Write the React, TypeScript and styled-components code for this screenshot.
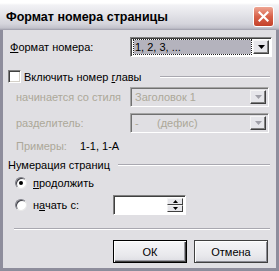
import React from "react";
import styled, { createGlobalStyle } from "styled-components";

const Global = createGlobalStyle`
  html, body { margin: 0; padding: 0; background: #ffffff; }
  body { font-family: "Liberation Sans", Arial, sans-serif; font-size: 11px; color: #000; }
`;

const Window = styled.div`
  width: 279px;
  height: 271px;
  display: flex;
  flex-direction: column;
  background: #8e8d9c;
  overflow: hidden;
`;

const TitleBar = styled.div`
  height: 30px;
  flex: none;
  display: flex;
  align-items: center;
  justify-content: space-between;
  padding: 0 5px 0 6px;
  box-sizing: border-box;
  background: linear-gradient(#ffffff 0px, #ffffff 3px, #f2f2f5 5px, #e4e4e9 14px, #d4d4db 24px, #c2c2cb 28px, #9c9ba8 30px);
`;

const Title = styled.div`
  font-family: "Liberation Sans", Arial, sans-serif;
  font-weight: bold;
  font-size: 12.5px;
  color: #000;
  padding-top: 3px;
`;

const CloseButton = styled.div`
  width: 21px;
  height: 21px;
  margin-top: 3px;
  box-sizing: border-box;
  border: 1px solid #ffffff;
  border-radius: 3px;
  background: linear-gradient(#eea593, #d8624a 50%, #c4412a);
  display: flex;
  align-items: center;
  justify-content: center;
`;

const Body = styled.div`
  flex: 1;
  background: #e0dfe3;
  margin: 0 3px 3px 3px;
  padding: 7px 4px 0 5px;
  display: flex;
  flex-direction: column;
`;

const Row = styled.div<{ $top: number; $h: number; $indent?: number; $right?: number }>`
  margin-top: ${(p) => p.$top}px;
  height: ${(p) => p.$h}px;
  padding-left: ${(p) => p.$indent ?? 0}px;
  padding-right: ${(p) => p.$right ?? 0}px;
  display: flex;
  align-items: center;
  flex: none;
`;

const Label = styled.div<{ $w?: number; $disabled?: boolean }>`
  width: ${(p) => (p.$w ? `${p.$w}px` : "auto")};
  flex: none;
  color: ${(p) => (p.$disabled ? "#aca899" : "#000")};
  white-space: nowrap;
`;

const Combo = styled.div<{ $disabled?: boolean }>`
  flex: 1;
  height: 100%;
  box-sizing: border-box;
  border: 1px solid;
  border-color: ${(p) => (p.$disabled ? "#a5a5a5 #fff #fff #a5a5a5" : "#808080 #fff #fff #808080")};
  box-shadow: inset 1px 1px 0 ${(p) => (p.$disabled ? "#707070" : "#404040")};
  background: ${(p) => (p.$disabled ? "#e0dfe3" : "#ffffff")};
  display: flex;
  align-items: stretch;
  padding: 2px 2px 2px 3px;
  color: ${(p) => (p.$disabled ? "#aca899" : "#000")};
`;

const ComboValue = styled.div<{ $selected?: boolean }>`
  flex: 1;
  display: flex;
  align-items: center;
  padding-left: 1px;
  margin-right: 2px;
  background: ${(p) => (p.$selected ? "#b4b3bd" : "transparent")};
  outline: ${(p) => (p.$selected ? "1px dotted #202020" : "none")};
  white-space: pre;
`;

const DropButton = styled.div<{ $disabled?: boolean }>`
  width: 16px;
  flex: none;
  box-sizing: border-box;
  border: 1px solid;
  border-color: #f4f4f4 #404040 #404040 #f4f4f4;
  box-shadow: inset -1px -1px 0 #808080;
  background: #e6e6ea;
  display: flex;
  align-items: center;
  justify-content: center;
  color: ${(p) => (p.$disabled ? "#a0a0a8" : "#000")};
`;

const Arrow = ({ up, small }: { up?: boolean; small?: boolean }) => (
  <svg width={small ? 5 : 7} height={small ? 3 : 4} viewBox={small ? "0 0 5 3" : "0 0 7 4"} style={{ display: "block" }}>
    {small ? (
      <polygon points={up ? "2.5,0 5,3 0,3" : "0,0 5,0 2.5,3"} fill="currentColor" />
    ) : (
      <polygon points={up ? "3.5,0 7,4 0,4" : "0,0 7,0 3.5,4"} fill="currentColor" />
    )}
  </svg>
);

const CheckBox = styled.div`
  width: 13px;
  height: 13px;
  flex: none;
  box-sizing: border-box;
  border: 1px solid;
  border-color: #808080 #ffffff #ffffff #808080;
  box-shadow: inset 1px 1px 0 #404040, inset -1px -1px 0 #d4d0c8;
  background: #fff;
  margin-right: 3px;
`;

const GroupLine = styled.div<{ $gap: number }>`
  flex: 1;
  height: 2px;
  margin-left: ${(p) => p.$gap}px;
  border-top: 1px solid #a9a8b0;
  border-bottom: 1px solid #ffffff;
  box-sizing: border-box;
`;

const Radio = styled.div<{ $checked?: boolean }>`
  width: 12px;
  height: 12px;
  flex: none;
  box-sizing: border-box;
  border-radius: 50%;
  background: #fff;
  border: 1px solid;
  border-color: #7d7d85 #e8e8e8 #e8e8e8 #7d7d85;
  box-shadow: inset 1px 1px 0 #404048;
  display: flex;
  align-items: center;
  justify-content: center;
  margin-right: 6px;
  &::after {
    content: "";
    display: ${(p) => (p.$checked ? "block" : "none")};
    width: 4px;
    height: 4px;
    border-radius: 50%;
    background: #000;
  }
`;

const SpinBox = styled.div`
  width: 73px;
  height: 100%;
  box-sizing: border-box;
  border: 1px solid;
  border-color: #808080 #ffffff #ffffff #808080;
  box-shadow: inset 1px 1px 0 #404040;
  background: #fff;
  display: flex;
  justify-content: flex-end;
  padding: 2px 2px 2px 0;
`;

const SpinButtons = styled.div`
  width: 16px;
  display: flex;
  flex-direction: column;
`;

const SpinButton = styled.div`
  flex: 1;
  box-sizing: border-box;
  border: 1px solid;
  border-color: #f4f4f4 #404040 #404040 #f4f4f4;
  background: #e6e6ea;
  display: flex;
  align-items: center;
  justify-content: center;
`;

const Separator = styled.div`
  margin: 13px 2px 0 6px;
  height: 2px;
  flex: none;
  box-sizing: border-box;
  border-top: 1px solid #a9a8b0;
  border-bottom: 1px solid #ffffff;
`;

const ButtonRow = styled.div`
  margin-top: 10px;
  display: flex;
  justify-content: flex-end;
  gap: 7px;
  padding-right: 4px;
  flex: none;
`;

const Button = styled.div<{ $default?: boolean }>`
  width: 74px;
  height: 23px;
  box-sizing: border-box;
  border: 1px solid ${(p) => (p.$default ? "#000" : "#404040")};
  box-shadow: ${(p) =>
    p.$default
      ? "inset 1px 1px 0 #ffffff, inset -1px -1px 0 #404040, inset -2px -2px 0 #9a9aa2"
      : "inset 1px 1px 0 #ffffff, inset -1px -1px 0 #8a8a92"};
  background: linear-gradient(#f6f6f8, #e8e8ec 70%, #dcdce2);
  display: flex;
  align-items: center;
  justify-content: center;
  color: #000;
`;

const U = styled.span`
  text-decoration: underline;
`;

export default function App() {
  return (
    <>
      <Global />
      <Window>
        <TitleBar>
          <Title>Формат номера страницы</Title>
          <CloseButton>
            <svg width="11" height="11" viewBox="0 0 11 11">
              <path d="M1.5 1.5 L9.5 9.5 M9.5 1.5 L1.5 9.5" stroke="#fff" strokeWidth="2.2" strokeLinecap="square" />
            </svg>
          </CloseButton>
        </TitleBar>
        <Body>
          <Row $top={0} $h={20} $indent={2}>
            <Label $w={120}>
              <U>Ф</U>ормат номера:
            </Label>
            <Combo>
              <ComboValue $selected>1, 2, 3, ...</ComboValue>
              <DropButton>
                <Arrow />
              </DropButton>
            </Combo>
          </Row>
          <Row $top={13} $h={13} $right={2}>
            <CheckBox />
            <Label>
              Включить номер <U>г</U>лавы
            </Label>
            <GroupLine $gap={18} />
          </Row>
          <Row $top={4} $h={20} $indent={8} $right={3}>
            <Label $w={114} $disabled>
              начинается со стиля
            </Label>
            <Combo $disabled>
              <ComboValue>Заголовок 1</ComboValue>
              <DropButton $disabled>
                <Arrow />
              </DropButton>
            </Combo>
          </Row>
          <Row $top={6} $h={20} $indent={8} $right={3}>
            <Label $w={114} $disabled>
              разделитель:
            </Label>
            <Combo $disabled>
              <ComboValue>{"-      (дефис)"}</ComboValue>
              <DropButton $disabled>
                <Arrow />
              </DropButton>
            </Combo>
          </Row>
          <Row $top={6} $h={13} $indent={8}>
            <Label $w={64} $disabled>
              Примеры:
            </Label>
            <Label>1-1, 1-А</Label>
          </Row>
          <Row $top={6} $h={13} $right={2}>
            <Label>Нумерация страниц</Label>
            <GroupLine $gap={8} />
          </Row>
          <Row $top={5} $h={13} $indent={7}>
            <Radio $checked />
            <Label>
              <U>п</U>родолжить
            </Label>
          </Row>
          <Row $top={6} $h={20} $indent={7}>
            <Radio />
            <Label $w={80}>
              н<U>а</U>чать с:
            </Label>
            <SpinBox>
              <SpinButtons>
                <SpinButton>
                  <Arrow up small />
                </SpinButton>
                <SpinButton>
                  <Arrow small />
                </SpinButton>
              </SpinButtons>
            </SpinBox>
          </Row>
          <Separator />
          <ButtonRow>
            <Button $default>ОК</Button>
            <Button>Отмена</Button>
          </ButtonRow>
        </Body>
      </Window>
    </>
  );
}
